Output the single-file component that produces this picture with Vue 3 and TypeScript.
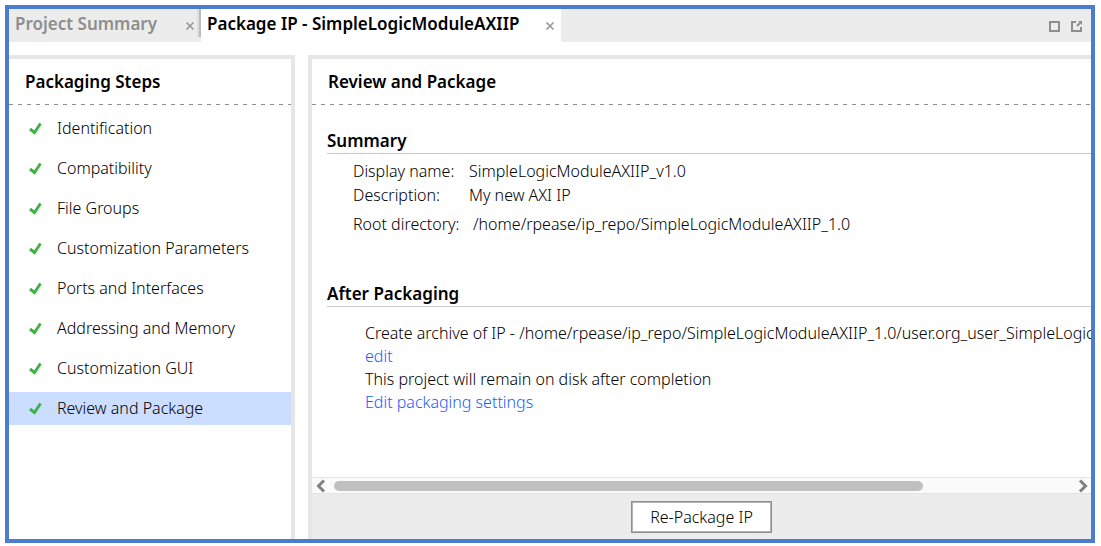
<script setup lang="ts">
import { ref } from 'vue'

const steps: string[] = [
  'Identification',
  'Compatibility',
  'File Groups',
  'Customization Parameters',
  'Ports and Interfaces',
  'Addressing and Memory',
  'Customization GUI',
  'Review and Package',
]
const current = ref('Review and Package')
</script>

<template>
  <div class="page">
    <div class="frame">
      <header class="tabs">
        <div class="tab">
          <button class="name">Project Summary</button>
          <button class="close" aria-label="Close Project Summary">
            <svg width="10" height="10" viewBox="0 0 10 10"><path d="M1.5 1.5L8.5 8.5M8.5 1.5L1.5 8.5" /></svg>
          </button>
        </div>
        <div class="tab active">
          <button class="name">Package IP - SimpleLogicModuleAXIIP</button>
          <button class="close" aria-label="Close Package IP">
            <svg width="10" height="10" viewBox="0 0 10 10"><path d="M1.5 1.5L8.5 8.5M8.5 1.5L1.5 8.5" /></svg>
          </button>
        </div>
        <div class="tools">
          <button aria-label="Maximize">
            <svg width="11" height="11" viewBox="0 0 11 11"><path d="M1 1H10V10H1Z" /></svg>
          </button>
          <button aria-label="Float">
            <svg width="11" height="11" viewBox="0 0 11 11"><path d="M5 1H1V10H10V6M6 5L9 2" /><path class="head" d="M7 0H11V4Z" /></svg>
          </button>
        </div>
      </header>

      <div class="body">
        <nav class="steps">
          <h2>Packaging Steps</h2>
          <div class="dashes"></div>
          <ul>
            <li v-for="step in steps" :key="step">
              <button :class="{ selected: step === current }" @click="current = step">
                <svg width="13" height="14" viewBox="0 0 13 14"><path d="M1 7L5.5 10.5L11.5 1.5" /></svg>
                <span>{{ step }}</span>
              </button>
            </li>
          </ul>
        </nav>

        <main class="review">
          <h2>Review and Package</h2>
          <div class="dashes"></div>
          <div class="content">
            <h3>Summary</h3>
            <dl>
              <div><dt>Display name:</dt><dd>SimpleLogicModuleAXIIP_v1.0</dd></div>
              <div><dt>Description:</dt><dd>My new AXI IP</dd></div>
              <div class="root"><dt>Root directory:</dt><dd>/home/rpease/ip_repo/SimpleLogicModuleAXIIP_1.0</dd></div>
            </dl>
            <h3>After Packaging</h3>
            <div class="after">
              <p>Create archive of IP - /home/rpease/ip_repo/SimpleLogicModuleAXIIP_1.0/user.org_user_SimpleLogic</p>
              <p><a href="#">edit</a></p>
              <p>This project will remain on disk after completion</p>
              <p><a href="#">Edit packaging settings</a></p>
            </div>
          </div>
          <div class="scroll">
            <button aria-label="Scroll left">
              <svg width="10" height="14" viewBox="0 0 10 14"><path d="M8 1.5L2.5 7L8 12.5" /></svg>
            </button>
            <div class="track"><div class="thumb"></div></div>
            <button aria-label="Scroll right">
              <svg width="10" height="14" viewBox="0 0 10 14"><path d="M2 1.5L7.5 7L2 12.5" /></svg>
            </button>
          </div>
          <footer><button>Re-Package IP</button></footer>
        </main>
      </div>
    </div>
  </div>
</template>

<style>
body { margin: 0; background: #fff; }
</style>

<style scoped>
* { box-sizing: border-box; }
.page {
  height: 100vh;
  padding: 5px 6px 3px 5px;
  font-family: "Noto Sans", "DejaVu Sans", sans-serif;
  font-size: 16px;
  font-weight: 350;
  line-height: 23px;
  color: #000;
}
button {
  margin: 0;
  padding: 0;
  border: 0;
  background: none;
  font: inherit;
  color: inherit;
  display: flex;
  align-items: center;
}
h2, h3, p, ul, dl, dd { margin: 0; padding: 0; }
svg { display: block; fill: none; flex: none; }
.frame {
  height: 100%;
  border: 4px solid #4a7dcf;
  display: flex;
  flex-direction: column;
  overflow: hidden;
}
.tabs { display: flex; height: 33px; background: #ececec; flex: none; }
.tab {
  position: relative;
  display: flex;
  justify-content: space-between;
  width: 192px;
  padding: 3px 6px 7px;
  color: #8e8e8e;
  font-size: 17px;
  font-weight: 600;
  white-space: nowrap;
}
.tab:first-child::after {
  content: "";
  position: absolute;
  top: 0;
  right: 0;
  width: 4px;
  height: 28px;
  background: linear-gradient(to right, #dedede 50%, #bcbcbc 50%);
}
.tab.active { width: 360px; background: #fff; color: #000; }
.close svg { stroke: #969696; stroke-width: 1.6; margin-top: 5px; }
.close { width: 10px; justify-content: center; }
.tools { display: flex; gap: 11px; margin-left: auto; padding: 2px 9px 0 0; }
.tools svg { stroke: #8e8e8e; stroke-width: 2; }
.tools .head { fill: #8e8e8e; stroke: none; }
.body { flex: 1; min-height: 0; display: flex; gap: 13px; padding-top: 13px; }
.steps { width: 286px; flex: none; border: solid #e6e6e6; border-width: 4px 4px 0 0; }
.review {
  flex: 1;
  min-width: 0;
  display: flex;
  flex-direction: column;
  border: solid #e6e6e6;
  border-width: 4px 0 0 4px;
}
h2, h3 { font-size: 17px; font-weight: 600; line-height: 23px; }
h2 { padding: 11px 16px; }
.dashes {
  flex: none;
  height: 1px;
  background: repeating-linear-gradient(to right, #8e8e8e 0 4px, transparent 4px 9px);
}
ul { list-style: none; display: grid; gap: 7px; padding-top: 7px; }
li button { width: 100%; height: 33px; gap: 15px; padding-left: 20px; text-align: left; }
li svg { stroke: #43b04a; stroke-width: 3; }
li .selected { background: #ccdeff; }
.content { flex: 1; min-height: 0; overflow: hidden; padding: 24px 0 0 15px; white-space: nowrap; }
h3 { border-bottom: 1px solid #cacaca; line-height: 24px; }
dl { padding: 6px 0 45px 26px; }
dl div { display: flex; height: 24px; }
dt { width: 116px; }
.root { padding-top: 5px; height: 29px; }
.root dt { width: 120px; }
.after { padding: 15px 0 0 38px; }
a { color: #1a5cff; text-decoration: none; }
.scroll {
  flex: none;
  display: flex;
  align-items: center;
  height: 17px;
  padding: 0 3px 0 4px;
  gap: 8px;
  border-top: 1px solid #e4e4e4;
  border-bottom: 1px solid #e4e4e4;
  background: #fafafa;
}
.scroll svg { stroke: #808080; stroke-width: 3; }
.track { flex: 1; }
.thumb { width: 80%; height: 10px; border-radius: 5px; background: #c0c0c0; }
footer { flex: none; display: flex; justify-content: center; padding: 7px 0 6px; background: #ececec; }
footer button { height: 32px; padding: 0 18px; border: 1px solid #8e8e8e; box-shadow: inset 0 0 0 1px #b4b4b4; background: #fff; }
</style>
